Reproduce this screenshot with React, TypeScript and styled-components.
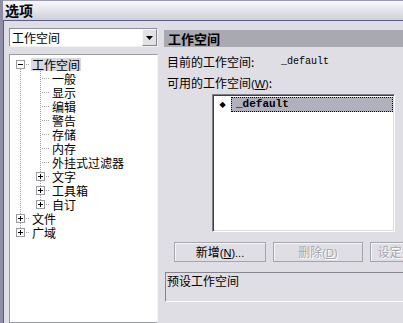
import React from 'react';
import styled, { createGlobalStyle } from 'styled-components';

const GlobalStyle = createGlobalStyle`
  html, body {
    margin: 0;
    padding: 0;
    background: #dfdee4;
  }
  body {
    font-family: "Noto Sans CJK SC", "DejaVu Sans", sans-serif;
    font-size: 12px;
    color: #000;
  }
`;

type TreeRow = {
  label: string;
  level: number;
  box?: 'plus' | 'minus';
  selected?: boolean;
  last?: boolean;
  first?: boolean;
};

const rows: TreeRow[] = [
  { label: '工作空间', level: 0, box: 'minus', selected: true, first: true },
  { label: '一般', level: 1 },
  { label: '显示', level: 1 },
  { label: '编辑', level: 1 },
  { label: '警告', level: 1 },
  { label: '存储', level: 1 },
  { label: '内存', level: 1 },
  { label: '外挂式过滤器', level: 1 },
  { label: '文字', level: 1, box: 'plus' },
  { label: '工具箱', level: 1, box: 'plus' },
  { label: '自订', level: 1, box: 'plus', last: true },
  { label: '文件', level: 0, box: 'plus' },
  { label: '广域', level: 0, box: 'plus', last: true },
];

// one 20x14 cell of the tree's dotted connector lines, with an optional +/- box
const Connector = ({
  up,
  down,
  right,
  box,
}: {
  up?: boolean;
  down?: boolean;
  right?: boolean;
  box?: 'plus' | 'minus';
}) => (
  <svg width="20" height="14" viewBox="0 0 20 14" shapeRendering="crispEdges">
    {up && <line x1="10.5" y1="0" x2="10.5" y2="7" stroke="#a0a0a0" strokeDasharray="1 1" />}
    {down && <line x1="10.5" y1="8" x2="10.5" y2="14" stroke="#a0a0a0" strokeDasharray="1 1" />}
    {right && <line x1={box ? 16 : 12} y1="7.5" x2="20" y2="7.5" stroke="#a0a0a0" strokeDasharray="1 1" />}
    {box && (
      <>
        <rect x="6.5" y="3.5" width="8" height="8" fill="#fff" stroke="#9a9aa0" />
        <line x1="8" y1="7.5" x2="13" y2="7.5" stroke="#000" />
        {box === 'plus' && <line x1="10.5" y1="5" x2="10.5" y2="10" stroke="#000" />}
      </>
    )}
  </svg>
);

const App = () => {
  return (
    <Window>
      <GlobalStyle />
      <TitleBar>选项</TitleBar>
      <Body>
        <LeftPane>
          <Combo>
            <ComboText>工作空间</ComboText>
            <DropButton>
              <svg width="7" height="4" viewBox="0 0 7 4">
                <path d="M0 0h7L3.5 4z" fill="#000" />
              </svg>
            </DropButton>
          </Combo>
          <Tree>
            {rows.map((r) => (
              <Row key={r.label}>
                {r.level === 0 ? (
                  <Connector up={!r.first} down={!r.last} right box={r.box} />
                ) : (
                  <>
                    <Connector up down />
                    <Connector up down={!r.last} right box={r.box} />
                  </>
                )}
                <Label $selected={r.selected}>{r.label}</Label>
              </Row>
            ))}
          </Tree>
        </LeftPane>
        <RightPane>
          <Header>工作空间</Header>
          <InfoRow>
            <span>目前的工作空间:</span>
            <Mono>_default</Mono>
          </InfoRow>
          <InfoRow>
            <span>
              可用的工作空间<Key>(<u>W</u>)</Key>:
            </span>
          </InfoRow>
          <ListBox>
            <ListItem>
              <Bullet>◆</Bullet>
              <ItemText>_default</ItemText>
            </ListItem>
          </ListBox>
          <Buttons>
            <Button $w={92}>
              新增<Key>(<u>N</u>)...</Key>
            </Button>
            <Button $w={90} disabled>
              删除<Key>(<u>D</u>)</Key>
            </Button>
            <Button $w={90} disabled>
              设定为目前<Key>(<u>S</u>)</Key>
            </Button>
          </Buttons>
          <Description>预设工作空间</Description>
        </RightPane>
      </Body>
    </Window>
  );
};

export default App;

const Window = styled.div`
  width: 403px;
  height: 323px;
  overflow: hidden;
  box-sizing: border-box;
  background: #dfdee4;
  border-left: 3px solid #8e8ea8;
  box-shadow: inset 1px 0 #5a5a7c;
  display: flex;
  flex-direction: column;
`;

const TitleBar = styled.div`
  height: 21px;
  flex-shrink: 0;
  box-sizing: border-box;
  border-top: 1px solid #9c9cb4;
  border-bottom: 1px solid #5a5a8c;
  background: linear-gradient(#f7f7fb, #d0d0da);
  padding-left: 2px;
  font-size: 14px;
  font-weight: bold;
  line-height: 19px;
`;

const Body = styled.div`
  flex: 1;
  display: flex;
  padding: 7px 0 0 6px;
  min-height: 0;
`;

const LeftPane = styled.div`
  width: 149px;
  flex-shrink: 0;
  display: flex;
  flex-direction: column;
  gap: 7px;
`;

const Combo = styled.div`
  height: 19px;
  box-sizing: border-box;
  background: #fff;
  border: 1px solid;
  border-color: #8e8e96 #f2f2f2 #f2f2f2 #8e8e96;
  display: flex;
  align-items: center;
`;

const ComboText = styled.span`
  flex: 1;
  padding-left: 2px;
  line-height: 17px;
`;

const DropButton = styled.div`
  width: 15px;
  height: 17px;
  box-sizing: border-box;
  background: #e2e2e6;
  border: 1px solid;
  border-color: #fafafa #86868e #86868e #fafafa;
  display: flex;
  align-items: center;
  justify-content: center;
`;

const Tree = styled.div`
  flex: 1;
  background: #fff;
  border: 1px solid;
  border-color: #9a9aa2 #f4f4f0 #9a9aa2 #9a9aa2;
  padding-top: 2px;
`;

const Row = styled.div`
  height: 14px;
  display: flex;
  align-items: center;
  svg {
    flex-shrink: 0;
  }
`;

const Label = styled.span<{ $selected?: boolean }>`
  margin-left: 1px;
  padding: 0 1px;
  line-height: 13px;
  white-space: nowrap;
  background: ${(p) => (p.$selected ? '#d8d8de' : 'transparent')};
`;

const RightPane = styled.div`
  flex: 1;
  min-width: 0;
  margin-left: 6px;
  padding-top: 2px;
  display: flex;
  flex-direction: column;
`;

const Header = styled.div`
  height: 17px;
  background: #a9a9b2;
  padding-left: 4px;
  font-size: 13px;
  font-weight: bold;
  line-height: 17px;
  white-space: nowrap;
`;

const InfoRow = styled.div`
  display: grid;
  grid-template-columns: 114px auto;
  align-items: center;
  height: 13px;
  margin-top: 8px;
  padding-left: 3px;
  line-height: 13px;
  white-space: nowrap;
`;

const Mono = styled.span`
  font-family: "Liberation Mono", monospace;
  font-size: 10px;
`;

const Key = styled.span`
  font-family: "Liberation Sans", sans-serif;
  font-size: 11px;
`;

const ListBox = styled.div`
  width: 183px;
  height: 138px;
  flex-shrink: 0;
  box-sizing: border-box;
  margin: 5px 0 0 48px;
  background: #fff;
  border: 1px solid;
  border-color: #808088 #ffffff #ffffff #808088;
  box-shadow: inset 1px 1px #404048, inset -1px -1px #dcdce2;
  padding: 1px 1px 0 1px;
`;

const ListItem = styled.div`
  display: flex;
  align-items: center;
  height: 16px;
`;

const Bullet = styled.span`
  width: 17px;
  text-align: center;
  font-size: 8px;
  font-family: "DejaVu Sans", sans-serif;
`;

const ItemText = styled.span`
  flex: 1;
  height: 15px;
  box-sizing: border-box;
  background: #b1b1bd;
  border: 1px dotted #000;
  padding-left: 4px;
  font-family: "Liberation Mono", monospace;
  font-weight: bold;
  font-size: 11px;
  line-height: 13px;
`;

const Buttons = styled.div`
  display: flex;
  gap: 7px;
  margin: 10px 0 0 10px;
`;

const Button = styled.button<{ $w: number }>`
  width: ${(p) => p.$w}px;
  height: 20px;
  flex-shrink: 0;
  box-sizing: border-box;
  padding: 0;
  background: #dfdee4;
  border: 1px solid #a4a4ac;
  box-shadow: inset 1px 1px #f6f6f8;
  font-family: "Noto Sans CJK SC", sans-serif;
  font-size: 12px;
  line-height: 18px;
  color: #000;
  white-space: nowrap;
  overflow: hidden;
  &:disabled {
    color: #a6a6ae;
    text-shadow: 1px 1px #fff;
  }
`;

const Description = styled.div`
  height: 30px;
  box-sizing: border-box;
  margin: 10px 0 0 1px;
  border-top: 1px solid #85858d;
  border-left: 1px solid #85858d;
  border-bottom: 1px solid #fbfbfb;
  padding: 1px 0 0 1px;
  line-height: 14px;
  white-space: nowrap;
`;
